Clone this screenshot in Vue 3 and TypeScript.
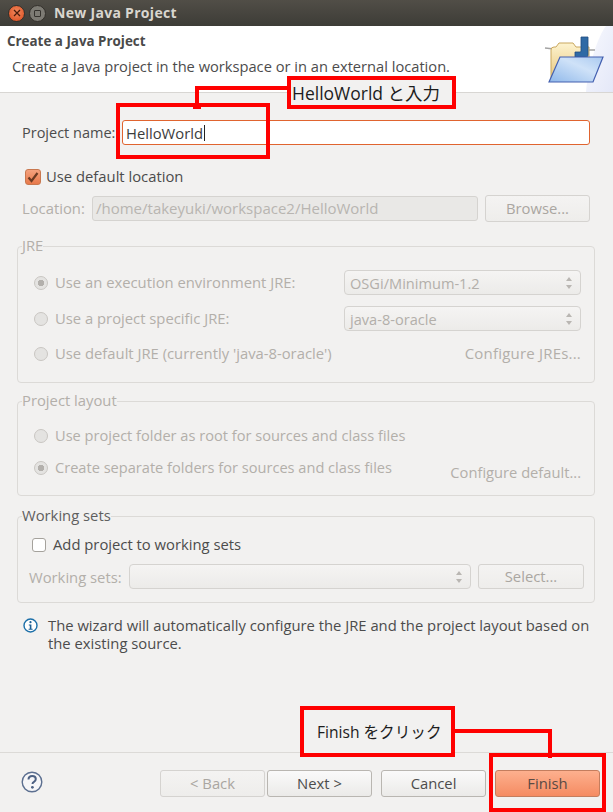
<script setup lang="ts">
const jreOptions = [
  { label: 'Use an execution environment JRE:', checked: true, select: 'OSGi/Minimum-1.2' },
  { label: 'Use a project specific JRE:', checked: false, select: 'java-8-oracle' },
]
</script>

<template>
  <div class="window">
    <div class="titlebar">
      <span class="win-btn close">
        <svg width="8" height="8" viewBox="0 0 8 8"><path d="M1 1l6 6M7 1l-6 6" stroke="#4a1c0c" stroke-width="1.3" /></svg>
      </span>
      <span class="win-btn max"><i></i></span>
      <span class="title">New Java Project</span>
    </div>

    <div class="banner">
      <div class="banner-text">
        <div class="banner-title">Create a Java Project</div>
        <div class="banner-desc">Create a Java project in the workspace or in an external location.</div>
      </div>
      <svg class="banner-art" width="70" height="66" viewBox="0 0 70 66">
        <defs>
          <linearGradient id="backFolder" x1="0" y1="0" x2="0" y2="1">
            <stop offset="0" stop-color="#fdf3cf" />
            <stop offset="1" stop-color="#e8c67c" />
          </linearGradient>
          <linearGradient id="frontFolder" x1="0" y1="1" x2="1" y2="0">
            <stop offset="0" stop-color="#8fb8ea" />
            <stop offset="0.6" stop-color="#cfe2f8" />
            <stop offset="1" stop-color="#a9c9f0" />
          </linearGradient>
          <linearGradient id="corner" x1="0" y1="0" x2="1" y2="1">
            <stop offset="0" stop-color="#f8f9fe" />
            <stop offset="1" stop-color="#e4e8f8" />
          </linearGradient>
        </defs>
        <path d="M70 0H63C55 10 45 40 43 66H70Z" fill="url(#corner)" />
        <path d="M2 22l9 1M46 24h6" stroke="#a3a3a3" stroke-width="1.500" fill="none" />
        <path d="M8 54V24q0-3 3-3h2l3-4h14l3 4h13V54Z" fill="url(#backFolder)" stroke="#c9a75f" />
        <path d="M38 11h7v18q0 2-2 2H32v-5h5q1 0 1-1Z" fill="#2f6aa5" stroke="#1e4c80" stroke-width="0.800" />
        <path d="M6 56L17 31H60L50 56Z" fill="url(#frontFolder)" stroke="#4460b0" stroke-width="1.200" />
      </svg>
    </div>

    <div class="content">
      <div class="name-row">
        <label class="field-label">Project name:</label>
        <div class="name-input">HelloWorld<span class="caret"></span></div>
      </div>

      <div class="check-row default-loc">
        <span class="check on">
          <svg width="12" height="12" viewBox="0 0 12 12"><path d="M1.500 6.500l3 3.500 6-8" fill="none" stroke="#6b3a22" stroke-width="2.200" /></svg>
        </span>
        <span class="check-label">Use default location</span>
      </div>

      <div class="location-row">
        <span class="dim">Location:</span>
        <div class="loc-input">/home/takeyuki/workspace2/HelloWorld</div>
        <div class="btn disabled browse">Browse...</div>
      </div>

      <fieldset class="group jre">
        <legend class="dim">JRE</legend>
        <div v-for="o in jreOptions" :key="o.label" class="opt-row">
          <span class="radio" :class="{ on: o.checked }"></span>
          <span class="dim opt-label">{{ o.label }}</span>
          <div class="select">
            <span>{{ o.select }}</span>
            <svg width="8" height="14" viewBox="0 0 8 14"><path d="M4 1l3 4H1ZM4 13L1 9h6Z" fill="#b9b6b2" /></svg>
          </div>
        </div>
        <div class="opt-row last">
          <span class="radio"></span>
          <span class="dim opt-label">Use default JRE (currently 'java-8-oracle')</span>
          <span class="dim link">Configure JREs...</span>
        </div>
      </fieldset>

      <fieldset class="group layout">
        <legend class="dim">Project layout</legend>
        <div class="layout-row first">
          <span class="radio"></span>
          <span class="dim opt-label">Use project folder as root for sources and class files</span>
        </div>
        <div class="layout-row">
          <span class="radio on"></span>
          <span class="dim opt-label">Create separate folders for sources and class files</span>
          <span class="dim link lower">Configure default...</span>
        </div>
      </fieldset>

      <fieldset class="group sets">
        <legend class="sets-legend">Working sets</legend>
        <div class="check-row add-set">
          <span class="check"></span>
          <span class="check-label">Add project to working sets</span>
        </div>
        <div class="sets-row">
          <span class="dim">Working sets:</span>
          <div class="select wide">
            <span></span>
            <svg width="8" height="14" viewBox="0 0 8 14"><path d="M4 1l3 4H1ZM4 13L1 9h6Z" fill="#b9b6b2" /></svg>
          </div>
          <div class="btn disabled select-btn">Select...</div>
        </div>
      </fieldset>

      <div class="info">
        <svg width="15" height="15" viewBox="0 0 15 15">
          <circle cx="7.500" cy="7.500" r="6.500" fill="#fff" stroke="#1c6fa8" stroke-width="1.400" />
          <circle cx="7.500" cy="4.200" r="1.100" fill="#1c5f94" />
          <path d="M5.800 6.500h2.600v4.300h1.200v1H5.600v-1h1.200V7.500h-1Z" fill="#1c5f94" />
        </svg>
        <p>The wizard will automatically configure the JRE and the project layout based on the existing source.</p>
      </div>
    </div>

    <div class="footer">
      <svg class="help" width="22" height="22" viewBox="0 0 22 22">
        <circle cx="11" cy="11" r="9.800" fill="#f6f6f8" stroke="#5c6f90" stroke-width="1.400" />
        <path d="M7.500 8.500q0-3.500 3.700-3.500 3.600 0 3.600 3 0 1.800-1.800 2.800-1.500.8-1.500 2.200" fill="none" stroke="#4d6183" stroke-width="2" />
        <circle cx="11.400" cy="16.300" r="1.400" fill="#4d6183" />
      </svg>
      <div class="buttons">
        <div class="btn disabled">&lt; Back</div>
        <div class="btn">Next &gt;</div>
        <div class="btn cancel">Cancel</div>
        <div class="btn primary">Finish</div>
      </div>
    </div>

    <!-- red annotations drawn over the screenshot -->
    <div class="note note-input">HelloWorld と入力</div>
    <div class="mark mark-input"></div>
    <div class="line line-a"></div>
    <div class="line line-b"></div>
    <div class="line line-tip"></div>

    <div class="note note-finish">Finish をクリック</div>
    <div class="mark mark-finish"></div>
    <div class="line line-c"></div>
    <div class="line line-d"></div>
  </div>
</template>

<style>
html,
body {
  margin: 0;
  background: #f2f1f0;
}
</style>

<style scoped>
.window {
  position: relative;
  width: 613px;
  height: 812px;
  overflow: hidden;
  display: flex;
  flex-direction: column;
  background: #f2f1f0;
  color: #4c4c4c;
  font-family: "Open Sans", "Noto Sans CJK JP", sans-serif;
  font-size: 14.8px;
  line-height: 18px;
}

.titlebar {
  height: 26px;
  flex: none;
  display: flex;
  align-items: center;
  padding-left: 8px;
  background: linear-gradient(#514e47, #3d3c37);
}

.win-btn {
  width: 15px;
  height: 15px;
  border-radius: 50%;
  display: flex;
  align-items: center;
  justify-content: center;
  margin-right: 4px;
}

.win-btn.close {
  background: radial-gradient(circle at 50% 40%, #f28a5e, #d9491b);
  border: 1px solid #33302b;
}

.win-btn.max {
  background: #7d7b74;
  border: 1px solid #33302b;
}

.win-btn.max i {
  width: 7px;
  height: 7px;
  border: 1px solid #35332e;
  border-radius: 1px;
  box-sizing: border-box;
}

.title {
  margin-left: 4px;
  color: #d9d6cf;
  font-weight: 700;
  font-size: 14px;
  letter-spacing: 0.3px;
}

.banner {
  height: 66px;
  flex: none;
  display: flex;
  justify-content: space-between;
  background: #fff;
  border-bottom: 1px solid #d8d6d3;
}

.banner-text {
  padding: 6px 0 0 7px;
}

.banner-title {
  font-weight: 700;
  font-size: 13.4px;
  color: #4a4a4a;
}

.banner-desc {
  margin: 7px 0 0 5px;
  font-size: 14.67px;
  white-space: nowrap;
}

.banner-art {
  flex: none;
}

.content {
  flex: 1;
  padding: 0 18px 0 17px;
}

.name-row {
  display: flex;
  align-items: center;
  margin-top: 27px;
  padding-left: 5px;
}

.field-label {
  width: 100px;
  flex: none;
  font-size: 14.5px;
  white-space: nowrap;
}

.name-input {
  flex: 1;
  height: 25px;
  box-sizing: border-box;
  display: flex;
  align-items: center;
  margin-right: 5px;
  padding-left: 3px;
  background: #fff;
  border: 1px solid #e0642f;
  border-radius: 3px;
  color: #3c3c3c;
}

.caret {
  width: 1px;
  height: 16px;
  margin-left: 1px;
  background: #222;
}

.check-row {
  display: flex;
  align-items: center;
}

.check-label {
  padding-bottom: 2px;
}

.default-loc {
  margin: 22px 0 0 8px;
  gap: 5px;
}

.check {
  width: 16px;
  height: 16px;
  box-sizing: border-box;
  flex: none;
  display: flex;
  align-items: center;
  justify-content: center;
  background: #fff;
  border: 1px solid #a5a29c;
  border-radius: 3px;
}

.check.on {
  background: linear-gradient(#f4a27e, #e8794a);
  border-color: #c9784f;
}

.location-row {
  display: flex;
  align-items: center;
  margin-top: 8px;
  padding: 0 5px;
}

.location-row > .dim {
  width: 70px;
  flex: none;
  padding-bottom: 2px;
}

.loc-input {
  width: 386px;
  height: 25px;
  box-sizing: border-box;
  flex: none;
  padding-left: 3px;
  font-size: 15px;
  line-height: 22px;
  white-space: nowrap;
  overflow: hidden;
  color: #b8b5b1;
  background: #e9e8e6;
  border: 1px solid #d5d3d0;
  border-radius: 3px;
}

.dim {
  color: #b3afaa;
}

.btn {
  width: 105px;
  height: 27px;
  box-sizing: border-box;
  flex: none;
  text-align: center;
  line-height: 25px;
  color: #4c4c4c;
  background: linear-gradient(#fafafa, #ebeae8);
  border: 1px solid #b9b6b1;
  border-radius: 3px;
}

.btn.disabled {
  color: #aaa6a1;
  background: linear-gradient(#f4f3f2, #eeedeb);
  border-color: #d5d3d0;
}

.browse {
  margin-left: 7px;
}

.group {
  margin: 0;
  padding: 0;
  border: 1px solid #dcdad7;
  border-radius: 4px;
  box-sizing: border-box;
}

.group legend {
  margin-left: 4px;
  padding: 0 0 2px;
  line-height: 16px;
}

.jre {
  margin-top: 15px;
  height: 146px;
}

.opt-row {
  display: flex;
  align-items: center;
  height: 25px;
  margin: 0 13px 11px 16px;
}

.opt-row:first-of-type {
  margin-top: 15px;
}

.opt-row.last {
  margin-top: -1px;
  margin-bottom: 0;
}

.radio {
  width: 14px;
  height: 14px;
  box-sizing: border-box;
  flex: none;
  border: 1px solid #c9c6c2;
  border-radius: 50%;
  background: #e4e3e1;
}

.radio.on {
  background: radial-gradient(circle, #b3b0ac 0 3px, #e4e3e1 3.500px);
}

.opt-label {
  margin-left: 7px;
  padding-bottom: 2px;
  white-space: nowrap;
}

.layout .opt-label {
  font-size: 14.6px;
}

.select {
  width: 237px;
  height: 25px;
  box-sizing: border-box;
  flex: none;
  display: flex;
  align-items: center;
  justify-content: space-between;
  margin-left: auto;
  padding: 0 7px 0 5px;
  font-size: 14.6px;
  color: #b3afaa;
  background: linear-gradient(#f5f4f3, #ecebe9);
  border: 1px solid #d5d3d0;
  border-radius: 4px;
}

.link {
  margin-left: auto;
  padding-bottom: 2px;
  font-size: 15px;
  letter-spacing: 0.2px;
  white-space: nowrap;
}

.layout {
  margin-top: 9px;
  height: 104px;
}

.layout-row {
  display: flex;
  align-items: center;
  height: 20px;
  padding: 0 13px 0 16px;
}

.layout-row.first {
  margin: 16px 0 12px;
}

.link.lower {
  position: relative;
  top: 5px;
  font-size: 14.7px;
  letter-spacing: 0;
}

.sets {
  margin-top: 11px;
  height: 96px;
}

.sets-legend {
  color: #5f5f5f;
}

.add-set {
  margin: 10px 0 0 14px;
  gap: 7px;
}

.add-set .check {
  width: 14px;
  height: 14px;
}

.sets-row {
  display: flex;
  align-items: center;
  margin: 9px 10px 0 11px;
}

.sets-row > .dim {
  width: 100px;
  flex: none;
}

.select.wide {
  width: 342px;
  margin-left: 0;
}

.select-btn {
  width: 106px;
  height: 25px;
  line-height: 23px;
  margin-left: 7px;
}

.info {
  display: flex;
  gap: 10px;
  margin: 13px 0 0 6px;
}

.info svg {
  flex: none;
  margin-top: 2px;
}

.info p {
  margin: 0;
  width: 545px;
}

.footer {
  height: 58px;
  flex: none;
  display: flex;
  align-items: center;
  justify-content: space-between;
  padding: 1px 13px 0 21px;
  border-top: 1px solid #dcdad7;
}

.help {
  margin-top: -2px;
}

.buttons {
  display: flex;
  align-items: center;
}

.buttons .btn + .btn {
  margin-left: 2px;
}

.buttons .cancel {
  margin-left: 9px !important;
}

.buttons .primary {
  margin-left: 9px !important;
  color: #5a4a44;
  background: linear-gradient(#fdb08e, #f58b62);
  border-color: #c47d5e;
}

.note,
.mark {
  position: absolute;
  box-sizing: border-box;
  border: 4px solid #ff0000;
}

.note {
  display: flex;
  align-items: center;
  color: #1d1d1d;
  white-space: nowrap;
  background: #f2f1f0;
}

.note-input {
  left: 287px;
  top: 76px;
  width: 169px;
  height: 33px;
  padding-left: 1px;
  font-size: 17.5px;
}

.note-finish {
  left: 300px;
  top: 706px;
  width: 155px;
  height: 51px;
  padding-left: 13px;
  font-size: 15.6px;
}

.mark-input {
  left: 116px;
  top: 103px;
  width: 154px;
  height: 56px;
}

.mark-finish {
  left: 489px;
  top: 753px;
  width: 117px;
  height: 59px;
}

.line {
  position: absolute;
  background: #ff0000;
}

.line-a {
  left: 195px;
  top: 86px;
  width: 93px;
  height: 4px;
}

.line-b {
  left: 195px;
  top: 86px;
  width: 4px;
  height: 23px;
}

.line-tip {
  left: 193px;
  top: 107px;
  width: 8px;
  height: 2px;
}

.line-c {
  left: 454px;
  top: 729px;
  width: 98px;
  height: 4px;
}

.line-d {
  left: 548px;
  top: 729px;
  width: 4px;
  height: 29px;
}
</style>
